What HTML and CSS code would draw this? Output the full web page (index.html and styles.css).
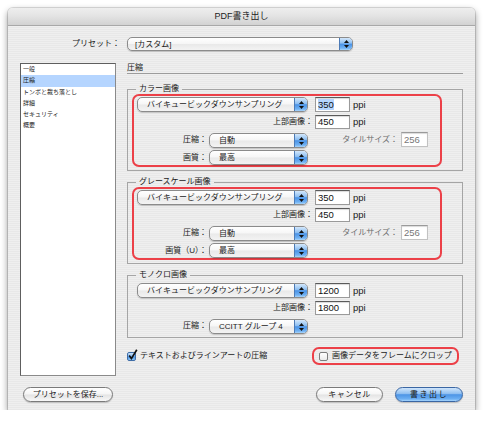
FILE: index.html
```html
<!DOCTYPE html>
<html lang="ja">
<head>
<meta charset="utf-8">
<title>PDF書き出し</title>
<link rel="stylesheet" href="styles.css">
</head>
<body>
<div class="window">
  <div class="titlebar">PDF書き出し</div>
  <div class="content">
    <div class="preset-row">
      <div class="preset-label">プリセット：</div>
      <div class="popup popup-preset"><span class="popup-text">[カスタム]</span><span class="arrows"><svg width="5" height="8" viewBox="0 0 5 8"><polygon points="0,3 2.5,0 5,3"/><polygon points="0,5 2.5,8 5,5"/></svg></span></div>
    </div>

    <div class="main">
      <ul class="list">
        <li>一般</li>
        <li class="sel">圧縮</li>
        <li>トンボと裁ち落とし</li>
        <li>詳細</li>
        <li>セキュリティ</li>
        <li>概要</li>
      </ul>

      <div class="panel">
        <div class="heading">圧縮</div>

        <fieldset class="group">
          <legend>カラー画像</legend>
          <div class="wrap red">
            <div class="row r1">
              <div class="popup w-wide"><span class="popup-text">バイキュービックダウンサンプリング</span><span class="arrows"><svg width="5" height="8" viewBox="0 0 5 8"><polygon points="0,3 2.5,0 5,3"/><polygon points="0,5 2.5,8 5,5"/></svg></span></div>
              <div class="field f-ppi"><span class="hl">350</span></div>
              <span class="unit">ppi</span>
            </div>
            <div class="row r2">
              <div class="lbl lbl-wide">上部画像：</div>
              <div class="field f-ppi">450</div>
              <span class="unit">ppi</span>
            </div>
            <div class="row r3">
              <div class="lbl lbl-short">圧縮：</div>
              <div class="popup w-mid"><span class="popup-text">自動</span><span class="arrows"><svg width="5" height="8" viewBox="0 0 5 8"><polygon points="0,3 2.5,0 5,3"/><polygon points="0,5 2.5,8 5,5"/></svg></span></div>
              <div class="lbl lbl-tile">タイルサイズ：</div>
              <div class="field f-tile">256</div>
            </div>
            <div class="row r4">
              <div class="lbl lbl-short">画質：</div>
              <div class="popup w-mid"><span class="popup-text">最高</span><span class="arrows"><svg width="5" height="8" viewBox="0 0 5 8"><polygon points="0,3 2.5,0 5,3"/><polygon points="0,5 2.5,8 5,5"/></svg></span></div>
            </div>
          </div>
        </fieldset>

        <fieldset class="group">
          <legend>グレースケール画像</legend>
          <div class="wrap red">
            <div class="row r1">
              <div class="popup w-wide"><span class="popup-text">バイキュービックダウンサンプリング</span><span class="arrows"><svg width="5" height="8" viewBox="0 0 5 8"><polygon points="0,3 2.5,0 5,3"/><polygon points="0,5 2.5,8 5,5"/></svg></span></div>
              <div class="field f-ppi">350</div>
              <span class="unit">ppi</span>
            </div>
            <div class="row r2">
              <div class="lbl lbl-wide">上部画像：</div>
              <div class="field f-ppi">450</div>
              <span class="unit">ppi</span>
            </div>
            <div class="row r3">
              <div class="lbl lbl-short">圧縮：</div>
              <div class="popup w-mid"><span class="popup-text">自動</span><span class="arrows"><svg width="5" height="8" viewBox="0 0 5 8"><polygon points="0,3 2.5,0 5,3"/><polygon points="0,5 2.5,8 5,5"/></svg></span></div>
              <div class="lbl lbl-tile">タイルサイズ：</div>
              <div class="field f-tile">256</div>
            </div>
            <div class="row r4">
              <div class="lbl lbl-short">画質（U）：</div>
              <div class="popup w-mid"><span class="popup-text">最高</span><span class="arrows"><svg width="5" height="8" viewBox="0 0 5 8"><polygon points="0,3 2.5,0 5,3"/><polygon points="0,5 2.5,8 5,5"/></svg></span></div>
            </div>
          </div>
        </fieldset>

        <fieldset class="group g3">
          <legend>モノクロ画像</legend>
          <div class="wrap">
            <div class="row r1">
              <div class="popup w-wide"><span class="popup-text">バイキュービックダウンサンプリング</span><span class="arrows"><svg width="5" height="8" viewBox="0 0 5 8"><polygon points="0,3 2.5,0 5,3"/><polygon points="0,5 2.5,8 5,5"/></svg></span></div>
              <div class="field f-ppi">1200</div>
              <span class="unit">ppi</span>
            </div>
            <div class="row r2">
              <div class="lbl lbl-wide">上部画像：</div>
              <div class="field f-ppi">1800</div>
              <span class="unit">ppi</span>
            </div>
            <div class="row r3">
              <div class="lbl lbl-short">圧縮：</div>
              <div class="popup w-mid"><span class="popup-text">CCITT グループ 4</span><span class="arrows"><svg width="5" height="8" viewBox="0 0 5 8"><polygon points="0,3 2.5,0 5,3"/><polygon points="0,5 2.5,8 5,5"/></svg></span></div>
            </div>
          </div>
        </fieldset>

        <div class="checks">
          <div class="check">
            <span class="cb checked"><svg width="11" height="12" viewBox="0 0 11 12"><path d="M2.2 6.6 L4.4 9.6 L9.8 0.8" fill="none" stroke="#111" stroke-width="1.7"/></svg></span>
            <span>テキストおよびラインアートの圧縮</span>
          </div>
          <div class="check crop">
            <span class="cb"></span>
            <span>画像データをフレームにクロップ</span>
          </div>
        </div>
      </div>
    </div>

    <div class="buttons">
      <div class="btn btn-save">プリセットを保存...</div>
      <div class="btn btn-cancel">キャンセル</div>
      <div class="btn btn-export">書き出し</div>
    </div>
  </div>
</div>
</body>
</html>
```

FILE: styles.css
```css
* { box-sizing: border-box; }
html, body { margin: 0; padding: 0; background: #fff; }
body {
  font-family: "Liberation Sans", "Noto Sans CJK JP", sans-serif;
  font-size: 8px;
  color: #1a1a1a;
}

.window {
  margin: 8px 0 0 8px;
  width: 467px;
  border-radius: 5px 5px 0 0;
  background: repeating-linear-gradient(#efefef 0 1px, #e8e8e8 1px 2px);
  box-shadow: 0 3px 7px rgba(0,0,0,.45), 0 0 0 1px rgba(0,0,0,.12);
  padding-bottom: 8px;
}

.titlebar {
  height: 18px;
  border-radius: 5px 5px 0 0;
  background: linear-gradient(#eeeeee, #e4e4e4 45%, #d2d2d2);
  border-bottom: 1px solid #a8a8a8;
  text-align: center;
  font-size: 9px;
  line-height: 17px;
  color: #222;
}

.content { padding: 0 12px; }

.preset-row {
  display: flex;
  align-items: center;
  margin-top: 11px;
  height: 14px;
}
.preset-label { width: 100px; text-align: right; margin-right: 7px; line-height: 14px; }
.popup-preset { width: 226px; height: 14px !important; }
.popup-preset .popup-text { padding-left: 7px; }

/* popup menus */
.popup {
  display: flex;
  height: 15px;
  border: 1px solid #8b8b8b;
  border-radius: 5px;
  overflow: hidden;
  background: linear-gradient(#ffffff, #f6f6f6 48%, #e9e9e9 52%, #f3f3f3);
  box-shadow: 0 1px 1px rgba(0,0,0,.18);
  flex: none;
}
.popup-text {
  flex: 1;
  padding-left: 9px;
  line-height: 13px;
  white-space: nowrap;
  overflow: hidden;
}
.arrows {
  width: 13px;
  flex: none;
  display: flex;
  align-items: center;
  justify-content: center;
  border-left: 1px solid #4d7bb6;
  background: linear-gradient(#d3e7fb, #8fc0f2 42%, #4b93e6 52%, #6fb1f3 85%, #a9d5fb);
}
.arrows svg { fill: #111; display: block; }

.w-wide { width: 171px; }
.w-mid { width: 99px; }

/* main area */
.main {
  display: grid;
  grid-template-columns: 96px 336px;
  column-gap: 11px;
  margin-top: 12px;
  height: 313px;
}

.list {
  margin: 0;
  padding: 0;
  list-style: none;
  background: #fff;
  border: 1px solid #5e5e5e;
  border-right-color: #8a8a8a;
  border-bottom-color: #8a8a8a;
}
.list li {
  font-size: 6px;
  line-height: 11.3px;
  height: 11.3px;
  padding-left: 2px;
  white-space: nowrap;
}
.list li.sel { background: #b5d5ff; }

.panel { min-width: 0; }

.heading {
  line-height: 10px;
  border-bottom: 1px solid #9c9c9c;
  margin-bottom: 10px;
}

.group {
  margin: 0;
  padding: 0 0 3px;
  border: 1px solid #a5a5a5;
  min-width: 0;
}
.group + .group { margin-top: 6px; }
.group.g3 { padding-bottom: 1px; }
.group legend {
  margin-left: 8px;
  padding: 0 3px;
  line-height: 10px;
  font-size: 8px;
}

.wrap {
  margin-left: 4px;
  width: 310px;
  border: 2px solid transparent;
  border-radius: 7px;
  padding: 1px 0 0 3px;
}
.wrap.red { border-color: #ec4048; }

.row { display: flex; align-items: center; }
.r1 { height: 15px; }
.r2 { height: 14px; margin-top: 3px; }
.r3 { height: 16px; margin-top: 3px; align-items: flex-start; }
.r3 .popup { margin-top: 1px; }
.r4 { height: 15px; margin-top: 2px; }

.lbl { text-align: right; white-space: nowrap; line-height: 14px; flex: none; }
.lbl-wide { width: 176px; margin-right: 2px; }
.lbl-short { width: 70px; margin-right: 2px; }
.r3 .lbl-short { line-height: 16px; }
.lbl-tile { width: 90px; margin-right: 3px; color: #6c6c6c; line-height: 15px; }

.field {
  flex: none;
  background: #fff;
  border: 1px solid #9a9a9a;
  border-top-color: #5a5a5a;
  box-shadow: inset 0 1px 1px rgba(0,0,0,.15);
  font-size: 9.5px;
  padding-left: 2px;
  color: #111;
}
.f-ppi { width: 35px; height: 15px; line-height: 13px; margin-left: 7px; }
.r2 .f-ppi { margin-left: 0; height: 14px; line-height: 12px; }
.f-tile { width: 27px; height: 15px; line-height: 13px; color: #777; border-color: #c2c2c2; border-top-color: #9a9a9a; }
.hl { background: #b5d5ff; }
.unit { margin-left: 3px; font-size: 9.5px; line-height: 14px; }

/* checkboxes */
.checks {
  display: flex;
  align-items: center;
  margin-top: 9px;
  height: 18px;
}
.check { display: flex; align-items: center; gap: 4px; line-height: 12px; white-space: nowrap; }
.crop {
  margin-left: auto;
  margin-right: 4px;
  width: 147px;
  height: 18px;
  border: 2px solid #ec4048;
  border-radius: 7px;
  padding-left: 5px;
}
.cb {
  position: relative;
  width: 9px;
  height: 9px;
  flex: none;
  border: 1px solid #7d7d7d;
  border-radius: 2px;
  background: linear-gradient(#ffffff, #ececec);
}
.cb.checked {
  border-color: #3f6ea8;
  background: linear-gradient(#cfe4fa, #7fb6ef 45%, #4a92e5 55%, #8cc6f6);
}
.cb.checked svg { position: absolute; left: -1px; top: -4px; }

/* buttons */
.buttons {
  display: flex;
  margin-top: 11px;
  height: 15px;
}
.btn {
  height: 15px;
  border: 1px solid #7a7a7a;
  border-radius: 8px;
  background: linear-gradient(#ffffff, #f5f5f5 48%, #e3e3e3 52%, #f8f8f8);
  box-shadow: 0 1px 1px rgba(0,0,0,.2);
  text-align: center;
  line-height: 13px;
  white-space: nowrap;
}
.btn-save { width: 90px; margin-left: 3px; }
.btn-cancel { width: 67px; margin-left: auto; letter-spacing: .5px; }
.btn-export {
  width: 68px;
  margin-left: 12px;
  letter-spacing: 1.5px;
  border-color: #3a66a3;
  background: linear-gradient(#cfe5fb, #93c1f1 42%, #4d95e6 52%, #6db0f3 85%, #a8d5fc);
}
```
